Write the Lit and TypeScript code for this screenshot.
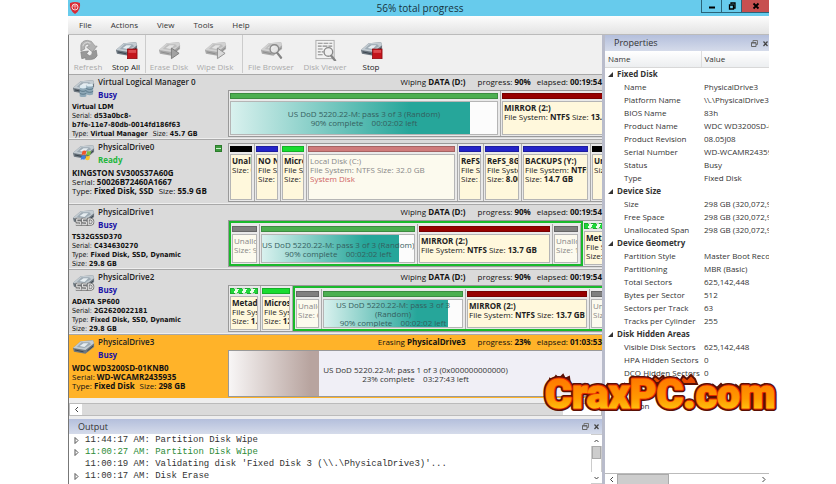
import { LitElement, html, css, svg, nothing } from "lit";
import { customElement, property } from "lit/decorators.js";
import { classMap } from "lit/directives/class-map.js";
import { styleMap } from "lit/directives/style-map.js";

type Job = { text: string; status: string; done: number; wrap?: boolean };
type Part = {
  width: number;
  bar: string;
  name?: string;
  lines?: [string, string][][];
  note?: string;
  dim?: boolean;
  job?: Job;
};
type Group = { framed?: boolean; width?: number; parts: Part[] };
type Drive = {
  name: string;
  state: "Busy" | "Ready";
  model: string;
  facts: [string, string][][];
  icon: string;
  activity?: [string, string, string, string];
  selected?: boolean;
  groups: Group[];
};

const erase: Job = {
  text: "US DoD 5220.22-M: pass 3 of 3 (Random)",
  status: "90% complete    00:02:02 left",
  done: 90,
};
const mirror = (width: number): Part => ({
  width,
  bar: "dark-red",
  name: "MIRROR (2:)",
  lines: [[["File System:", "NTFS"], ["Size:", "13.7 GB"]]],
});
const free = (width: number, size: string): Part => ({
  width,
  bar: "grey",
  dim: true,
  note: "Unallocated",
  lines: [[["Size:", size]]],
});

const drives: Drive[] = [
  {
    name: "Virtual Logical Manager 0",
    state: "Busy",
    model: "Virtual LDM",
    facts: [
      [["Serial:", "d53a0bc8-"]],
      [["", "b7fe-11e7-80db-0014fd186f63"]],
      [["Type:", "Virtual Manager"], ["Size:", "45.7 GB"]],
    ],
    icon: "stack",
    activity: ["Wiping", "DATA (D:)", "90%", "00:19:54"],
    groups: [{ parts: [{ width: 272, bar: "green", job: erase }, mirror(130)] }],
  },
  {
    name: "PhysicalDrive0",
    state: "Ready",
    model: "KINGSTON SV300S37A60G",
    facts: [
      [["Serial:", "50026B72460A1667"]],
      [["Type:", "Fixed Disk, SSD"], ["Size:", "55.9 GB"]],
    ],
    icon: "windows",
    groups: [
      {
        parts: [
          { width: 26, bar: "black", name: "Unallocated", lines: [[["Size:", "0.9 GB"]]] },
          { width: 26, bar: "blue", name: "NO NAME", lines: [[["File System:", ""]], [["Size:", "1 GB"]]] },
          { width: 26, bar: "lime", name: "Microsoft", lines: [[["File System:", ""]], [["Size:", "128 MB"]]] },
          {
            width: 151,
            bar: "rose",
            dim: true,
            note: "Local Disk (C:)",
            lines: [[["File System:", "NTFS"], ["Size:", "32.0 GB"]], [["!", "System Disk"]]],
          },
          { width: 26, bar: "blue", name: "ReFS", lines: [[["File System:", ""]], [["Size:", "2 GB"]]] },
          { width: 38, bar: "blue", name: "ReFS_8GB", lines: [[["File System:", ""]], [["Size:", "8.00 GB"]]] },
          { width: 69, bar: "blue", name: "BACKUPS (Y:)", lines: [[["File System:", "NTFS"]], [["Size:", "14.7 GB"]]] },
          { width: 40, bar: "black", name: "Unallocated", lines: [[["Size:", "1 GB"]]] },
        ],
      },
    ],
  },
  {
    name: "PhysicalDrive1",
    state: "Busy",
    model: "TS32GSSD370",
    facts: [
      [["Serial:", "C434630270"]],
      [["Type:", "Fixed Disk, SSD, Dynamic"]],
      [["Size:", "29.8 GB"]],
    ],
    icon: "ssd",
    activity: ["Wiping", "DATA (D:)", "90%", "00:19:54"],
    groups: [
      { framed: true, width: 354, parts: [free(29, "9 MB"), { width: 158, bar: "green", job: erase }, mirror(135), free(28, "1 MB")] },
      { parts: [{ width: 40, bar: "striped", name: "Metadata", lines: [[["File System:", ""]], [["Size:", "1.0 MB"]]] }] },
    ],
  },
  {
    name: "PhysicalDrive2",
    state: "Busy",
    model: "ADATA SP600",
    facts: [
      [["Serial:", "2G2620022181"]],
      [["Type:", "Fixed Disk, SSD, Dynamic"]],
      [["Size:", "29.8 GB"]],
    ],
    icon: "ssd",
    activity: ["Wiping", "DATA (D:)", "90%", "00:19:54"],
    groups: [
      {
        parts: [
          { width: 32, bar: "striped", name: "Metadata", lines: [[["File System:", ""]], [["Size:", "1.0 MB"]]] },
          { width: 32, bar: "lime", name: "Microsoft", lines: [[["File System:", ""]], [["Size:", "128 MB"]]] },
        ],
      },
      { framed: true, width: 360, parts: [free(27, "6 MB"), { width: 144, bar: "green", job: { ...erase, wrap: true } }, mirror(124), free(40, "1 MB")] },
    ],
  },
  {
    name: "PhysicalDrive3",
    state: "Busy",
    model: "WDC WD3200SD-01KNB0",
    facts: [
      [["Serial:", "WD-WCAMR2435935"]],
      [["Type:", "Fixed Disk"], ["Size:", "298 GB"]],
    ],
    icon: "disk",
    activity: ["Erasing", "PhysicalDrive3", "23%", "01:03:53"],
    selected: true,
    groups: [],
  },
];

const properties: [string, [string, string][]][] = [
  ["Fixed Disk", [
    ["Name", "PhysicalDrive3"],
    ["Platform Name", "\\\\.\\PhysicalDrive3"],
    ["BIOS Name", "83h"],
    ["Product Name", "WDC WD3200SD-01KNB0"],
    ["Product Revision", "08.05J08"],
    ["Serial Number", "WD-WCAMR2435935"],
    ["Status", "Busy"],
    ["Type", "Fixed Disk"],
  ]],
  ["Device Size", [
    ["Size", "298 GB (320,072,933,376)"],
    ["Free Space", "298 GB (320,072,933,376)"],
    ["Unallocated Span", "298 GB (320,072,933,376)"],
  ]],
  ["Device Geometry", [
    ["Partition Style", "Master Boot Record"],
    ["Partitioning", "MBR (Basic)"],
    ["Total Sectors", "625,142,448"],
    ["Bytes per Sector", "512"],
    ["Sectors per Track", "63"],
    ["Tracks per Cylinder", "255"],
  ]],
  ["Disk Hidden Areas", [
    ["Visible Disk Sectors", "625,142,448"],
    ["HPA Hidden Sectors", "0"],
    ["DCO Hidden Sectors", "0"],
  ]],
];

const diskShape = (dim: boolean) => svg`
  <path d="M1 10 L9 3 L22 2 L23 5 L23 9 L14 16 L2 14 Z" fill=${dim ? "#a9a9a9" : "#6d7780"}/>
  <path d="M1 10 L9 3 L22 2 L23 5 L14 12 Z" fill=${dim ? "#d2d2d2" : "#c3ccd2"}/>
  <path d="M5 9 L10 4 L18 4 L20 6 L13 10 Z" fill=${dim ? "#bdbdbd" : "#9eabb4"}/>
  <path d="M8 8 L12 5 L17 5 L13 9 Z" fill=${dim ? "#e4e4e4" : "#e6edf1"}/>
  <path d="M3 12 L12 14 M16 13 L22 8" stroke=${dim ? "#8d8d8d" : "#39444d"} stroke-width="1"/>`;

const lens = svg`
  <circle cx="15" cy="10" r="4.5" fill="#eee" fill-opacity=".8" stroke="#8a8a8a" stroke-width="1.4"/>
  <path d="M18 14 L22 19" stroke="#858585" stroke-width="2.4" stroke-linecap="round"/>`;

const toolIcons: Record<string, unknown> = {
  refresh: svg`
    <path d="M4 12 L4 6 Q5 1 11 1 L15 2 L19 7 L21 7 L16 13 L10 8 L13 7 L11 5 Q8 5 8 8 L8 10 Z" fill="#b3b3b3" stroke="#8b8b8b" stroke-width=".7"/>
    <path d="M20 11 L21 17 Q19 21 14 21 L9 21 L9 19 L5 20 L4 13 L12 12 L10 15 L13 17 Q16 17 16 13 Z" fill="#989898" stroke="#808080" stroke-width=".7"/>
    <path d="M6 7 Q7 3 11 3 L14 4" stroke="#ddd" fill="none"/>`,
  stop: svg`<g transform="translate(0 1)">${diskShape(false)}</g>
    <rect x="13" y="10" width="10" height="10" fill="#c3151c" stroke="#8d0a10" stroke-width=".8"/>
    <path d="M14 11 H22 V14 H14 Z" fill="#dd4a4e"/>`,
  erase: svg`<g transform="translate(0 1)">${diskShape(true)}</g>
    <path d="M14 9 L22 14.500 L14 20 Z" fill="#a2a2a2" stroke="#7d7d7d"/>`,
  wipe: svg`<g transform="translate(0 1)">${diskShape(true)}</g>
    <path d="M14 9 L22 14.500 L14 20 Z" fill="#d9d9d9" stroke="#8f8f8f"/>`,
  browse: svg`<g transform="translate(0 1)">${diskShape(true)}</g>${lens}`,
  viewer: svg`<rect x="2" y="1" width="19" height="19" fill="#f3f3f3" stroke="#aaa"/>
    <path d="M4 4 H9 M10 4 H15 M16 4 H19 M4 7 H8 M9 7 H14 M15 7 H19 M4 10 H9 M4 13 H7 M8 13 H10 M4 16 H9" stroke="#8c8c8c" stroke-width="1.200"/>
    <g transform="translate(0 3)">${lens}</g>`,
};

const driveIcons: Record<string, unknown> = {
  stack: svg`${diskShape(false)}
    <path d="M8 9 V18 A3.500 1.500 0 0 0 15 18 V9 Z M15 7 V16 A3.500 1.500 0 0 0 22 16 V7 Z" fill="#8fa9b8"/>
    <path d="M8 12 A3.500 1.500 0 0 0 15 12 M8 15 A3.500 1.500 0 0 0 15 15 M15 10 A3.500 1.500 0 0 0 22 10 M15 13 A3.500 1.500 0 0 0 22 13" stroke="#4f6c7d" stroke-width=".8" fill="none"/>
    <ellipse cx="11.500" cy="9" rx="3.500" ry="1.500" fill="#dceaf1"/><ellipse cx="18.500" cy="7" rx="3.500" ry="1.500" fill="#dceaf1"/>`,
  windows: svg`${diskShape(false)}
    <path d="M11 8 Q13 7 15 8 L14 12 Q12 11 10 12 Z" fill="#f0562a"/><path d="M16 8 Q18 9 20 8 L19 12 Q17 13 15 12 Z" fill="#7cc043"/>
    <path d="M10 13 Q12 12 14 13 L13 17 Q11 16 9 17 Z" fill="#3d7fe0"/><path d="M15 13 Q17 14 19 13 L18 17 Q16 18 14 17 Z" fill="#fbc52c"/>`,
  ssd: svg`${diskShape(false)}
    <path d="M9 11 H5 V14 H9 V17 H4 M15 11 H11 V14 H15 V17 H10 M17 11 V17 H19 Q22 17 22 14 Q22 11 19 11 Z" stroke="#777" stroke-width="2.600" fill="none"/>
    <path d="M9 11 H5 V14 H9 V17 H4 M15 11 H11 V14 H15 V17 H10 M17 11 V17 H19 Q22 17 22 14 Q22 11 19 11 Z" stroke="#eee" stroke-width="1" fill="none"/>`,
  disk: diskShape(false),
};

const floatIcon = html`<svg class="glyph" viewBox="0 0 7 7"><path d="M2 2 V.500 H6.500 V4.500 H5" fill="none" stroke="#777"/><path d="M.500 2.500 H5 V6.500 H.500 Z M.500 3 H5" fill="none" stroke="#666"/></svg>`;
const closeIcon = html`<svg class="glyph" viewBox="0 0 7 7"><path d="M1.500 1.500 L5.500 6 M5.500 1.500 L1.500 6" stroke="#444" stroke-width="1.200"/></svg>`;

const shared = css`
  :host { display: block; box-sizing: border-box; }
  * { box-sizing: border-box; }
  button { font: inherit; color: inherit; border: 0; padding: 0; margin: 0; background: none; }
  .glyph { width: 7px; height: 7px; display: block; }
`;

@customElement("drive-partition")
class DrivePartition extends LitElement {
  @property({ attribute: false }) part_!: Part;

  static styles = [shared, css`
    :host { display: flex; min-width: 0; }
    .part { flex: 1; min-width: 0; display: flex; flex-direction: column; gap: 2px; padding: 2px 2px 1px 1px; background: #e9e9e9; border-right: 1px solid #aaa; }
    .bar { height: 6px; flex: none; border: 1px solid #0003; }
    .green { background: #4caf50; }
    .dark-red { background: #970000; }
    .black { background: #000; }
    .blue { background: #2424c8; }
    .lime { background: #18dc30; }
    .rose { background: #cf7b7b; }
    .grey { background: #808080; }
    .striped { background: repeating-linear-gradient(120deg, #20d63a 0 4px, #e9ffe9 4px 7px); }
    .body { flex: 1; min-height: 0; overflow: hidden; white-space: nowrap; background: #fff8dc; border: 1px solid #b5b5b5; padding: 1px; line-height: 9px; color: #222; }
    .dim { background: #fcfaee; color: #888; }
    .alert { color: #cf6464; }
    .job { padding: 0; background: #fcfcfc; display: grid; align-items: stretch; }
    .fill, .caption { grid-area: 1 / 1; }
    .fill { background: linear-gradient(90deg, #d9f1ee, #26a69a 75%); }
    .caption { place-self: center; text-align: center; white-space: pre; color: #35605e; }
    .wrap { white-space: pre-wrap; }
  `];

  render() {
    const p = this.part_;
    return html`<div class="part">
      <div class="bar ${p.bar}"></div>
      ${p.job
        ? html`<div class="body job">
            <div class="fill" style=${styleMap({ width: `${p.job.done}%` })}></div>
            <div class=${classMap({ caption: true, wrap: !!p.job.wrap })}>${p.job.text}<br />${p.job.status}</div>
          </div>`
        : html`<div class=${classMap({ body: true, dim: !!p.dim })}>
            ${p.name ? html`<b>${p.name}</b>` : p.note}
            ${p.lines?.map((line) => html`<div>${line.map(([k, v]) =>
              k === "!" ? html`<span class="alert">${v}</span>`
                : p.dim ? html`${k} ${v} ` : html`${k} <b>${v}</b> `)}</div>`)}
          </div>`}
    </div>`;
  }
}

@customElement("drive-row")
class DriveRow extends LitElement {
  @property({ attribute: false }) drive!: Drive;

  static styles = [shared, css`
    .row { display: grid; grid-template-columns: 159px minmax(0, 1fr); height: 65px; background: #dadada; border-top: 1px solid #a8a8a8; border-bottom: 1px solid #eee; }
    .selected { background: #ffb329; }
    .info { padding: 1px 0 0 3px; white-space: nowrap; overflow: hidden; }
    .head { display: flex; gap: 3px; }
    .icon { width: 23px; height: 20px; margin-top: 2px; }
    .title { flex: 1; line-height: 12px; font-weight: 600; color: #222; }
    .state { font-weight: 700; color: #1a14a8; line-height: 13px; }
    .Ready { color: #23b63c; }
    .lock { width: 7px; height: 7px; margin: 4px 6px 0 0; background: linear-gradient(#3c9a3c 40%, #c8eec8 40% 60%, #3c9a3c 60%); border: 1px solid #2c7c2c; }
    .facts { margin-top: 2px; font: 7px/9px "DejaVu Sans Condensed", "DejaVu Sans", sans-serif; color: #111; }
    .roomy { font: 8px/9px "Open Sans", "Noto Sans", sans-serif; }
    .fact { margin-right: 5px; }
    .map { display: flex; flex-direction: column; min-width: 0; padding-bottom: 1px; }
    .quiet { padding-top: 3px; }
    .activity { display: flex; justify-content: flex-end; height: 15px; line-height: 14px; color: #111; white-space: nowrap; }
    .activity span { margin-left: 6px; }
    .activity .progress { margin-left: 12px; }
    .parts { flex: 1; min-height: 0; display: flex; overflow: hidden; border: 1px solid #999; border-right: 0; background: #e9e9e9; }
    .group { display: flex; flex: none; }
    .framed { border: 2px solid #19b92b; padding-top: 1px; }
    .erasing { display: grid; background: #f0eff6; }
    .erased { grid-area: 1 / 1; width: 24%; background: linear-gradient(90deg, #f8f6f6, #b8a49f 90%); }
    .caption { grid-area: 1 / 1; place-self: center; text-align: center; white-space: pre; line-height: 9px; color: #333; }
  `];

  render() {
    const d = this.drive;
    return html`<section class=${classMap({ row: true, selected: !!d.selected })}>
      <div class="info">
        <div class="head">
          <svg class="icon" viewBox="0 0 24 20">${driveIcons[d.icon]}</svg>
          <div class="title">${d.name}<div class="state ${d.state}">${d.state}</div></div>
          ${d.state === "Ready" ? html`<div class="lock"></div>` : nothing}
        </div>
        <div class=${classMap({ facts: true, roomy: d.facts.length < 3 })}>
          <b>${d.model}</b>
          ${d.facts.map((line) => html`<div>${line.map(([k, v]) => html`<span class="fact">${k ? `${k} ` : ""}<b>${v}</b></span>`)}</div>`)}
        </div>
      </div>
      <div class=${classMap({ map: true, quiet: !d.activity })}>
        ${d.activity
          ? html`<div class="activity">
              <span>${d.activity[0]} <b>${d.activity[1]}</b></span>
              <span class="progress">progress: <b>${d.activity[2]}</b></span>
              <span>elapsed: <b>${d.activity[3]}</b></span>
            </div>`
          : nothing}
        ${d.groups.length
          ? html`<div class="parts">${d.groups.map((g) => html`
              <div class=${classMap({ group: true, framed: !!g.framed })} style=${styleMap(g.width ? { width: `${g.width}px` } : {})}>
                ${g.parts.map((p) => html`<drive-partition .part_=${p} style=${styleMap({ width: `${p.width}px` })}></drive-partition>`)}
              </div>`)}</div>`
          : html`<div class="parts erasing">
              <div class="erased"></div>
              <div class="caption">US DoD 5220.22-M: pass 1 of 3 (0x000000000000)<br />23% complete    03:27:43 left</div>
            </div>`}
      </div>
    </section>`;
  }
}

@customElement("app-root")
class AppRoot extends LitElement {
  static styles = [shared, css`
    :host { min-height: 100vh; background: #fff; padding: 0 67px 0 68px; font: 8px/10px "Open Sans", "Noto Sans", sans-serif; color: #333; overflow: hidden; }
    .window { display: flex; flex-direction: column; height: 100vh; background: #f0f0f0; position: relative; }
    .titlebar { display: flex; height: 16px; flex: none; background: #67cbec; color: #16323d; }
    .shield { width: 12px; height: 13px; margin: 1px 0 0 1px; }
    .caption { flex: 1; text-align: center; font-size: 10px; font-weight: 400; line-height: 16px; margin: 0 0 0 58px; }
    .win { width: 20px; height: 13px; border: 1px solid #2a6479; border-top: 0; border-right: 0; display: grid; place-items: center; }
    .win svg { width: 8px; height: 8px; }
    .shut { width: 28px; background: #c75050; }
    .menu { display: flex; gap: 19px; height: 19px; flex: none; padding: 0 11px; align-items: center; background: linear-gradient(#fdfdfd, #e3e3e3); border-bottom: 1px solid #bbb; }
    .workspace { flex: 1; min-height: 0; display: grid; grid-template-columns: minmax(0, 1fr) 164px; gap: 3px; background: #b9bccb; }
    .main { display: flex; flex-direction: column; min-width: 0; min-height: 0; background: #eee; border-left: 1px solid #777; }
    .tools { display: flex; height: 39px; flex: none; align-items: flex-start; background: #f0f0f0; }
    .tool { display: flex; flex-direction: column; align-items: center; gap: 1px; padding-top: 4px; width: 46px; color: #aaa; }
    .narrow { width: 38px; }
    .wide { width: 54px; }
    .tool svg { width: 23px; height: 22px; }
    .on { color: #222; }
    .rule { width: 1px; height: 38px; background: #ccc; }
    .spaced { margin: 0 1px 0 4px; }
    .hscroll { display: flex; height: 13px; margin-top: 4px; flex: none; border: 1px solid #bbb; background: #dadada; justify-content: space-between; }
    .arrow { width: 12px; background: #fff; display: grid; place-items: center; flex: none; }
    .arrow svg { width: 5px; height: 7px; }
    .space { width: 38px; background: #fff; }
    .panel-head { display: flex; align-items: center; gap: 4px; height: 15px; flex: none; padding: 0 2px 0 9px; background: linear-gradient(#b4bfdc, #d5dbea); }
    .panel-head h2 { flex: 1; margin: 0; font-size: 9px; font-weight: 400; }
    .output { margin-top: 3px; flex: 1; min-height: 0; display: flex; flex-direction: column; }
    .log { flex: 1; min-height: 0; display: flex; background: #fff; overflow: hidden; }
    .entries { flex: 1; min-width: 0; margin: 0; padding: 0; list-style: none; font: 9px/12px "Liberation Mono", monospace; white-space: nowrap; }
    .entries li { display: flex; align-items: center; gap: 6px; padding-left: 5px; }
    .twist { width: 5px; height: 7px; }
    .good { color: #2c8a36; }
    .vscroll { width: 11px; display: flex; flex-direction: column; align-items: center; border: 1px solid #ccc; }
    .vscroll .arrow { height: 11px; }
    .thumb { height: 13px; width: 9px; background: #cdcdcd; border: 1px solid #aaa; flex: none; }
    .track { flex: 1; }
    .props { display: flex; flex-direction: column; min-width: 0; min-height: 0; background: #fff; overflow: hidden; }
    .props .panel-head { height: 16px; padding-right: 0; }
    table { border-collapse: collapse; table-layout: fixed; width: 100%; }
    .col-name { width: 96px; }
    tr { height: 13px; }
    th, td { padding: 0; text-align: left; font-weight: 400; white-space: nowrap; overflow: hidden; }
    thead th { height: 16px; background: linear-gradient(#fff, #eceef0); border-bottom: 1px solid #d8d8d8; padding-left: 3px; }
    thead th + th { border-left: 1px solid #ddd; }
    .section { font-weight: 700; padding-left: 3px; }
    .section svg { width: 5px; height: 5px; margin-right: 4px; }
    .key { padding-left: 19px; overflow: visible; }
    .value { padding-left: 3px; }
    .last { height: 32px; vertical-align: bottom; }
    .pscroll { display: flex; height: 11px; margin-top: auto; flex: none; border-top: 1px solid #bbb; background: #fff; }
    .pscroll .thumb { width: 52px; height: 11px; }
    .brand { position: absolute; right: -8px; top: 364px; width: 236px; height: 56px; overflow: visible; }
    .brand text { font: 900 41px "Roboto", "Open Sans", sans-serif; }
  `];

  private tool(icon: string, label: string, cls = "", on = false) {
    return html`<button class="tool ${cls} ${on ? "on" : ""}" ?disabled=${!on}>
      <svg viewBox="0 0 24 22">${toolIcons[icon]}</svg>${label}</button>`;
  }

  private arrow(d: string, label: string) {
    return html`<button class="arrow" aria-label=${label}><svg viewBox="0 0 5 7"><path d=${d} fill="none" stroke="#444"/></svg></button>`;
  }

  private entry(text: string, cls = "", twist = true) {
    return html`<li class=${cls}><svg class="twist" viewBox="0 0 5 7">${twist ? svg`<path d="M1 .500 L4 3.500 L1 6.500 Z" fill="none" stroke="#555"/>` : nothing}</svg>${text}</li>`;
  }

  render() {
    return html`<div class="window">
      <header class="titlebar">
        <svg class="shield" viewBox="0 0 12 13"><path d="M1 2 Q6 0 11 2 Q12 9 6 13 Q0 9 1 2 Z" fill="#d92a35"/><circle cx="6" cy="6" r="3" fill="none" stroke="#fff" stroke-opacity=".8"/><path d="M4 5 H8 M6 3 V8" stroke="#f8b8bb" stroke-width=".8"/></svg>
        <h1 class="caption">56% total progress</h1>
        <button class="win" aria-label="Minimize"><svg viewBox="0 0 8 8"><path d="M1 5.500 H7" stroke="#000" stroke-width="2"/></svg></button>
        <button class="win" aria-label="Restore"><svg viewBox="0 0 8 8"><path d="M3 2 V1 H7 V6 H6 M1.500 3 H5.500 V7 H1.500 Z" fill="none" stroke="#000" stroke-width="1.300"/></svg></button>
        <button class="win shut" aria-label="Close"><svg viewBox="0 0 8 8"><path d="M1.500 1.500 L6.500 6.500 M6.500 1.500 L1.500 6.500" stroke="#000" stroke-width="1.800"/></svg></button>
      </header>
      <nav class="menu">
        ${["File", "Actions", "View", "Tools", "Help"].map((m) => html`<button>${m}</button>`)}
      </nav>
      <div class="workspace">
        <main class="main">
          <div class="tools">
            ${this.tool("refresh", "Refresh", "narrow")}
            ${this.tool("stop", "Stop All", "narrow", true)}
            <div class="rule"></div>
            ${this.tool("erase", "Erase Disk")}
            ${this.tool("wipe", "Wipe Disk")}
            <div class="rule spaced"></div>
            ${this.tool("browse", "File Browser", "wide")}
            ${this.tool("viewer", "Disk Viewer", "wide")}
            ${this.tool("stop", "Stop", "narrow", true)}
          </div>
          ${drives.map((d) => html`<drive-row .drive=${d}></drive-row>`)}
          <div class="hscroll">${this.arrow("M4 1 L1.500 3.500 L4 6", "Scroll left")}<div class="space"></div></div>
          <section class="output">
            <div class="panel-head"><h2>Output</h2><button aria-label="Float">${floatIcon}</button><button aria-label="Close">${closeIcon}</button></div>
            <div class="log">
              <ul class="entries">
                ${this.entry("11:44:17 AM: Partition Disk Wipe")}
                ${this.entry("11:00:27 AM: Partition Disk Wipe", "good")}
                ${this.entry("11:00:19 AM: Validating disk 'Fixed Disk 3 (\\\\.\\PhysicalDrive3)'...", "", false)}
                ${this.entry("11:00:17 AM: Disk Erase")}
              </ul>
              <div class="vscroll">${this.arrow("M.500 5 L2.500 3 L4.500 5", "Scroll up")}<div class="thumb"></div><div class="track"></div>${this.arrow("M.500 3 L2.500 5 L4.500 3", "Scroll down")}</div>
            </div>
          </section>
        </main>
        <aside class="props">
          <div class="panel-head"><h2>Properties</h2><button aria-label="Float">${floatIcon}</button><button aria-label="Close">${closeIcon}</button></div>
          <table>
            <colgroup><col class="col-name" /><col /></colgroup>
            <thead><tr><th>Name</th><th>Value</th></tr></thead>
            ${properties.map(([title, rows]) => html`<tbody>
              <tr><th class="section" colspan="2"><svg viewBox="0 0 5 5"><path d="M5 0 V5 H0 Z" fill="#333"/></svg>${title}</th></tr>
              ${rows.map(([k, v]) => html`<tr><th class="key">${k}</th><td class="value">${v}</td></tr>`)}
            </tbody>`)}
            <tbody><tr><th class="key last">Region</th><td></td></tr></tbody>
          </table>
          <div class="pscroll">${this.arrow("M4 1 L1.500 3.500 L4 6", "Scroll left")}<div class="thumb"></div><div class="track"></div>${this.arrow("M1.500 1 L4 3.500 L1.500 6", "Scroll right")}</div>
        </aside>
      </div>
      <svg class="brand" viewBox="0 0 236 56">
        <defs><linearGradient id="fire" x1="0" y1="0" x2="0" y2="1"><stop offset="0" stop-color="#ff6a00"/><stop offset=".6" stop-color="#ff9a00"/><stop offset="1" stop-color="#ffe01a"/></linearGradient></defs>
        <path d="M8 20 L9 15 L12 17 L15 12 L18 15 L22 11 L24 15 L28 13 L29 20 Z M36 27 L37 21 L40 24 L44 20 L48 24 L49 28 Z M58 27 L61 21 L64 24 L67 20 L71 23 L75 27 Z M82 26 L84 20 L88 24 L93 21 L96 23 L99 20 L101 27 Z M106 19 L107 13 L111 16 L114 12 L118 15 L122 12 L125 16 L128 19 Z M134 20 L136 14 L139 17 L142 12 L146 15 L150 11 L154 15 L156 20 Z M170 27 L172 21 L176 24 L180 20 L183 23 L186 27 Z M192 27 L195 21 L199 24 L203 20 L207 23 L210 27 Z M214 27 L216 21 L220 24 L224 20 L228 23 L232 27 Z" fill="#e84a00" stroke="#5a1005" stroke-width="2"/>
        <text x="4" y="44" fill="#5a1005" stroke="#5a1005" stroke-width="6" stroke-linejoin="round">CraxPC.com</text>
        <text x="4" y="44" fill="#e52a00" stroke="#e52a00" stroke-width="3" stroke-linejoin="round">CraxPC.com</text>
        <text x="4" y="44" fill="url(#fire)" stroke="url(#fire)" stroke-width="1">CraxPC.com</text>
      </svg>
    </div>`;
  }
}
